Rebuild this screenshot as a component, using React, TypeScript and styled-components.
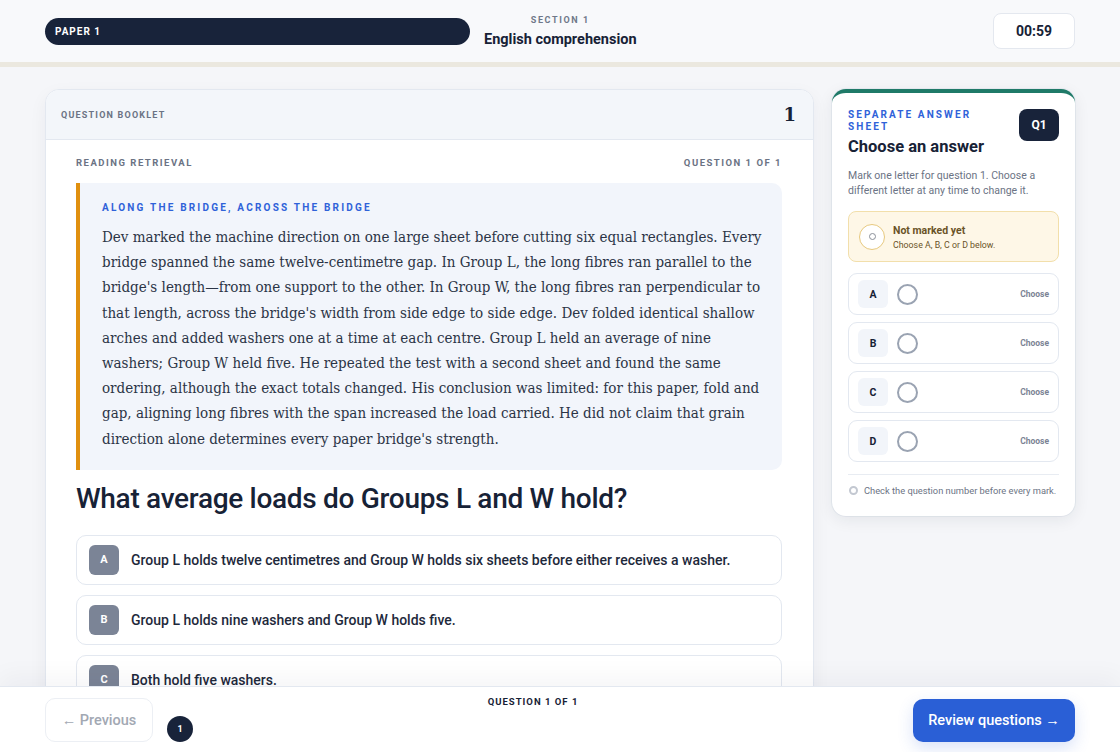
import styled, { createGlobalStyle } from "styled-components";

const GlobalStyle = createGlobalStyle`
  html, body {
    margin: 0;
    padding: 0;
    height: 100%;
    background: #f5f6f9;
    font-family: Roboto, "Liberation Sans", sans-serif;
    color: #172236;
  }
  #root {
    height: 100%;
  }
  * {
    box-sizing: border-box;
  }
`;

const Page = styled.div`
  height: 752px;
  display: flex;
  flex-direction: column;
  overflow: hidden;
`;

const TopBar = styled.header`
  height: 67px;
  flex-shrink: 0;
  display: grid;
  grid-template-columns: 425px 1fr 82px;
  align-items: center;
  column-gap: 14px;
  padding: 0 45px;
  background: #f8f9fb;
  border-bottom: 5px solid #ebe8df;
`;

const PaperPill = styled.div`
  height: 27px;
  border-radius: 14px;
  background: #18233a;
  color: #fff;
  display: flex;
  align-items: center;
  padding: 0 10px;
  font-size: 10px;
  font-weight: 700;
  letter-spacing: 1px;
`;

const SectionBlock = styled.div`
  justify-self: start;
  display: flex;
  flex-direction: column;
  align-items: center;
  margin-top: 1px;
`;

const SectionKicker = styled.div`
  font-size: 9px;
  font-weight: 700;
  letter-spacing: 1.6px;
  color: #6f7889;
`;

const SectionTitle = styled.div`
  font-size: 14.5px;
  font-weight: 700;
  color: #172236;
  margin-top: 6px;
`;

const Timer = styled.div`
  height: 36px;
  border-radius: 8px;
  background: #fff;
  border: 1px solid #e4e8ef;
  display: flex;
  align-items: center;
  justify-content: center;
  font-size: 14px;
  font-weight: 700;
`;

const Main = styled.main`
  flex: 1;
  min-height: 0;
  overflow: hidden;
  display: flex;
  align-items: flex-start;
  gap: 18px;
  padding: 22px 45px 0;
`;

const Booklet = styled.section`
  width: 769px;
  flex-shrink: 0;
  background: #fff;
  border: 1px solid #e3e8f0;
  border-radius: 14px;
  box-shadow: 0 6px 18px rgba(23, 34, 54, 0.05);
  overflow: hidden;
`;

const BookletHead = styled.div`
  height: 50px;
  display: flex;
  align-items: center;
  justify-content: space-between;
  padding: 0 15px;
  background: #f3f6fa;
  border-bottom: 1px solid #e3e8f0;
`;

const Eyebrow = styled.span<{ $tone?: "gray" | "blue" | "small" }>`
  font-size: ${({ $tone }) =>
    $tone === "blue" ? "10px" : $tone === "small" ? "9px" : "9.5px"};
  font-weight: 700;
  letter-spacing: ${({ $tone }) =>
    $tone === "blue" ? "2.2px" : $tone === "small" ? "1.2px" : "1.5px"};
  color: ${({ $tone }) => ($tone === "blue" ? "#2f62d9" : "#6b7384")};
  text-transform: uppercase;
`;

const PageNum = styled.span`
  font-family: "DejaVu Serif", serif;
  font-size: 18px;
  font-weight: 700;
  color: #172236;
  margin-right: 2px;
`;

const BookletBody = styled.div`
  padding: 14px 31px 40px 30px;
`;

const MetaRow = styled.div`
  display: flex;
  justify-content: space-between;
  align-items: center;
  height: 16px;
  margin-bottom: 13px;
`;

const Passage = styled.article`
  background: #f2f5fb;
  border-left: 4px solid #e0900f;
  border-radius: 0 10px 10px 0;
  padding: 13px 19px 18px 22px;
`;

const PassageText = styled.p`
  margin: 10px 0 0;
  font-family: "DejaVu Serif Condensed", "DejaVu Serif", serif;
  font-stretch: condensed;
  font-size: 15px;
  line-height: 25.2px;
  color: #2b3446;
`;

const Question = styled.h2`
  margin: 12px 0 20px;
  font-size: 28px;
  font-weight: 500;
  letter-spacing: -0.3px;
  color: #172236;
`;

const OptionList = styled.div`
  display: flex;
  flex-direction: column;
  gap: 10px;
`;

const OptionCard = styled.div`
  height: 50px;
  display: flex;
  align-items: center;
  gap: 12px;
  padding: 0 12px;
  border: 1px solid #e3e8f0;
  border-radius: 10px;
  background: #fff;
  font-size: 14px;
  font-weight: 500;
  color: #1e293b;
`;

const OptionBadge = styled.span`
  width: 30px;
  height: 30px;
  border-radius: 6px;
  background: #7b8496;
  color: #fff;
  display: flex;
  align-items: center;
  justify-content: center;
  font-size: 11px;
  font-weight: 700;
  flex-shrink: 0;
`;

const Sheet = styled.aside`
  width: 243px;
  flex-shrink: 0;
  background: #fff;
  border-radius: 14px;
  border-top: 4px solid #1f7a68;
  box-shadow: 0 4px 16px rgba(23, 34, 54, 0.08), 0 0 0 1px #e8ecf2;
  padding: 16px 16px 20px;
`;

const SheetHead = styled.div`
  display: flex;
  justify-content: space-between;
  align-items: flex-start;
`;

const SheetTitleBlock = styled.div`
  display: flex;
  flex-direction: column;
`;

const SheetKicker = styled.div`
  font-size: 10px;
  font-weight: 700;
  letter-spacing: 2.1px;
  line-height: 12px;
  color: #2f62d9;
  width: 130px;
`;

const SheetTitle = styled.h3`
  margin: 4px 0 0;
  font-size: 16.5px;
  font-weight: 700;
  color: #172236;
`;

const QBadge = styled.div`
  width: 40px;
  height: 32px;
  border-radius: 8px;
  background: #18233a;
  color: #fff;
  display: flex;
  align-items: center;
  justify-content: center;
  font-size: 12px;
  font-weight: 700;
`;

const SheetHint = styled.p`
  margin: 12px 0 13px;
  font-size: 10.5px;
  line-height: 15px;
  color: #6b7384;
`;

const StatusBox = styled.div`
  height: 51px;
  display: flex;
  align-items: center;
  gap: 8px;
  padding: 0 10px;
  background: #fef7e7;
  border: 1px solid #f2dfab;
  border-radius: 8px;
`;

const StatusRing = styled.span`
  width: 26px;
  height: 26px;
  border-radius: 50%;
  border: 1.5px solid #e7c97f;
  background: #fff;
  display: flex;
  align-items: center;
  justify-content: center;
  flex-shrink: 0;
  &::after {
    content: "";
    width: 5px;
    height: 5px;
    border-radius: 50%;
    border: 1px solid #8a8f99;
  }
`;

const StatusText = styled.div`
  display: flex;
  flex-direction: column;
  gap: 3px;
  color: #6a5327;
`;

const StatusTitle = styled.span`
  font-size: 10.5px;
  font-weight: 700;
`;

const StatusSub = styled.span`
  font-size: 8.8px;
`;

const ChoiceList = styled.div`
  display: flex;
  flex-direction: column;
  gap: 7px;
  margin-top: 11px;
`;

const ChoiceRow = styled.div`
  height: 42px;
  display: flex;
  align-items: center;
  padding: 0 9px;
  border: 1px solid #e3e8f0;
  border-radius: 9px;
`;

const ChoiceLetter = styled.span`
  width: 30px;
  height: 28px;
  border-radius: 6px;
  background: #f2f5fa;
  display: flex;
  align-items: center;
  justify-content: center;
  font-size: 10.5px;
  font-weight: 700;
  color: #172236;
`;

const ChoiceRing = styled.span`
  width: 21px;
  height: 21px;
  border-radius: 50%;
  border: 2px solid #9aa3b2;
  margin-left: 9px;
`;

const ChoiceAction = styled.span`
  margin-left: auto;
  font-size: 8.5px;
  font-weight: 700;
  color: #7b8394;
`;

const SheetNote = styled.div`
  margin-top: 12px;
  padding-top: 10px;
  border-top: 1px solid #e8ecf2;
  display: flex;
  align-items: center;
  gap: 6px;
  font-size: 9.3px;
  color: #6b7384;
  &::before {
    content: "";
    width: 5px;
    height: 5px;
    border-radius: 50%;
    border: 2px solid #c3c8d1;
    margin-left: 1px;
  }
`;

const BottomBar = styled.footer`
  height: 66px;
  flex-shrink: 0;
  display: flex;
  align-items: flex-start;
  padding: 11px 45px 0;
  gap: 14px;
  background: #fff;
  border-top: 1px solid #e3e8f0;
  position: relative;
  box-shadow: 0 -10px 24px rgba(23, 34, 54, 0.04);
`;

const PrevButton = styled.button`
  width: 108px;
  height: 44px;
  padding: 0;
  white-space: nowrap;
  border-radius: 10px;
  border: 1px solid #eceff4;
  background: #fff;
  color: #a2a8b3;
  font-family: Roboto, sans-serif;
  font-size: 14.5px;
  font-weight: 500;
`;

const NavCenter = styled.div`
  flex: 1;
  display: flex;
  flex-direction: column;
  align-items: flex-start;
`;

const NavLabel = styled.div`
  align-self: stretch;
  text-align: center;
  font-size: 9.5px;
  font-weight: 700;
  letter-spacing: 1px;
  color: #172236;
  margin-top: -2px;
`;

const Dots = styled.div`
  display: flex;
  gap: 6px;
  margin-top: 9px;
`;

const Dot = styled.span`
  width: 26px;
  height: 26px;
  border-radius: 50%;
  background: #18233a;
  color: #fff;
  display: flex;
  align-items: center;
  justify-content: center;
  font-size: 9px;
  font-weight: 700;
`;

const ReviewButton = styled.button`
  width: 162px;
  height: 43px;
  margin-top: 1px;
  padding: 0;
  white-space: nowrap;
  border: none;
  border-radius: 10px;
  background: #2a5fd6;
  color: #fff;
  font-family: Roboto, sans-serif;
  font-size: 14.5px;
  font-weight: 500;
  box-shadow: 0 6px 16px rgba(42, 95, 214, 0.18);
`;

const options = [
  "Group L holds twelve centimetres and Group W holds six sheets before either receives a washer.",
  "Group L holds nine washers and Group W holds five.",
  "Both hold five washers.",
];

export default function App() {
  return (
    <Page>
      <GlobalStyle />
      <TopBar>
        <PaperPill>PAPER 1</PaperPill>
        <SectionBlock>
          <SectionKicker>SECTION 1</SectionKicker>
          <SectionTitle>English comprehension</SectionTitle>
        </SectionBlock>
        <Timer>00:59</Timer>
      </TopBar>

      <Main>
        <Booklet>
          <BookletHead>
            <Eyebrow $tone="small">Question booklet</Eyebrow>
            <PageNum>1</PageNum>
          </BookletHead>
          <BookletBody>
            <MetaRow>
              <Eyebrow>Reading retrieval</Eyebrow>
              <Eyebrow>Question 1 of 1</Eyebrow>
            </MetaRow>
            <Passage>
              <Eyebrow $tone="blue">Along the bridge, across the bridge</Eyebrow>
              <PassageText>
                Dev marked the machine direction on one large sheet before cutting six equal
                rectangles. Every bridge spanned the same twelve-centimetre gap. In Group L, the
                long fibres ran parallel to the bridge's length—from one support to the other. In
                Group W, the long fibres ran perpendicular to that length, across the bridge's width
                from side edge to side edge. Dev folded identical shallow arches and added washers
                one at a time at each centre. Group L held an average of nine washers; Group W held
                five. He repeated the test with a second sheet and found the same ordering, although
                the exact totals changed. His conclusion was limited: for this paper, fold and gap,
                aligning long fibres with the span increased the load carried. He did not claim that
                grain direction alone determines every paper bridge's strength.
              </PassageText>
            </Passage>
            <Question>What average loads do Groups L and W hold?</Question>
            <OptionList>
              {options.map((text, i) => (
                <OptionCard key={text}>
                  <OptionBadge>{"ABCD"[i]}</OptionBadge>
                  {text}
                </OptionCard>
              ))}
            </OptionList>
          </BookletBody>
        </Booklet>

        <Sheet>
          <SheetHead>
            <SheetTitleBlock>
              <SheetKicker>SEPARATE ANSWER SHEET</SheetKicker>
              <SheetTitle>Choose an answer</SheetTitle>
            </SheetTitleBlock>
            <QBadge>Q1</QBadge>
          </SheetHead>
          <SheetHint>
            Mark one letter for question 1. Choose a different letter at any time to change it.
          </SheetHint>
          <StatusBox>
            <StatusRing />
            <StatusText>
              <StatusTitle>Not marked yet</StatusTitle>
              <StatusSub>Choose A, B, C or D below.</StatusSub>
            </StatusText>
          </StatusBox>
          <ChoiceList>
            {["A", "B", "C", "D"].map((letter) => (
              <ChoiceRow key={letter}>
                <ChoiceLetter>{letter}</ChoiceLetter>
                <ChoiceRing />
                <ChoiceAction>Choose</ChoiceAction>
              </ChoiceRow>
            ))}
          </ChoiceList>
          <SheetNote>Check the question number before every mark.</SheetNote>
        </Sheet>
      </Main>

      <BottomBar>
        <PrevButton>← Previous</PrevButton>
        <NavCenter>
          <NavLabel>QUESTION 1 OF 1</NavLabel>
          <Dots>
            <Dot>1</Dot>
          </Dots>
        </NavCenter>
        <ReviewButton>Review questions →</ReviewButton>
      </BottomBar>
    </Page>
  );
}
